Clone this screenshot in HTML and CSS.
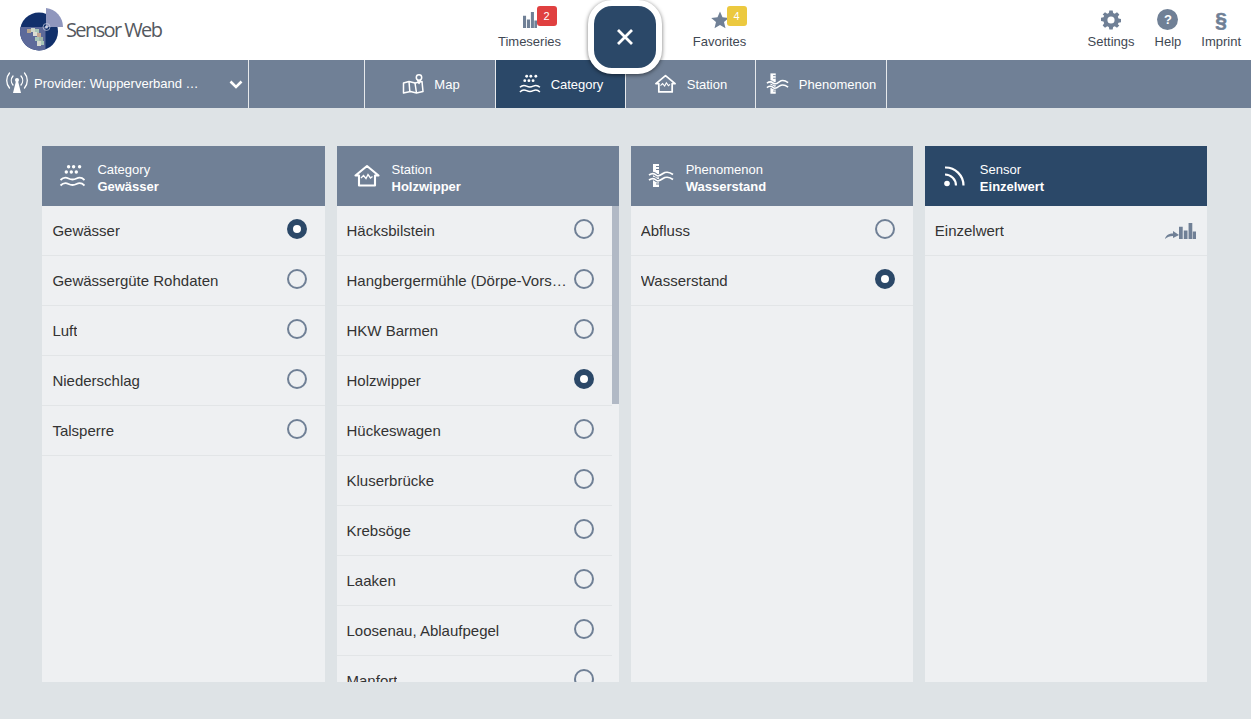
FILE: index.html
```html
<!DOCTYPE html>
<html lang="de">
<head>
  <meta charset="UTF-8">
  <meta name="viewport" content="width=device-width, initial-scale=1">
  <title>Sensor Web</title>
  <link rel="stylesheet" href="styles.css">
</head>
<body>
  <!-- Icons -->
  <svg class="icon-defs" width="0" height="0">
    <symbol id="i-water" viewBox="0 0 26 24">
      <g fill="currentColor">
        <circle cx="9.600" cy="2.700" r="1.700"/><circle cx="14.600" cy="2.700" r="1.700"/><circle cx="20.600" cy="2.700" r="1.700"/>
        <circle cx="7.300" cy="8" r="1.700"/><circle cx="12.300" cy="8" r="1.700"/><circle cx="17.300" cy="8" r="1.700"/>
      </g>
      <g fill="none" stroke="currentColor" stroke-width="1.800">
        <path d="M1.500 16c3-3 5-3 8-1.500s5 1.500 8 0 5-1.500 8 1.500"/>
        <path d="M1.500 21.500c3-3 5-3 8-1.500s5 1.500 8 0 5-1.500 8 1.500"/>
      </g>
    </symbol>
    <symbol id="i-house" viewBox="0 0 26 24">
      <path d="M1.500 11.500 13 2l11.500 9.500h-3.500v10H5v-10z" fill="none" stroke="currentColor" stroke-width="2.100" stroke-linejoin="round"/>
      <path d="M7 14l2.500-2.500 2.500 3 2-4 2.500 3.500 2-1.500" fill="none" stroke="currentColor" stroke-width="1.300"/>
    </symbol>
    <symbol id="i-gauge" viewBox="0 0 26 24">
      <path d="M5 0h6v23H5z" fill="currentColor"/>
      <path d="M8 2.500h3M8 5.500h3M8 20h3" stroke="#708096" stroke-width="1"/>
      <g fill="none" stroke="#708096" stroke-width="3.400">
        <path d="M1 11c3-2 5-2 7 0s5 0 7-1.500 6-2 10 1"/>
        <path d="M1 16c3-2 5-2 7 0s5 0 7-1.500 6-2 10 1"/>
      </g>
      <g fill="none" stroke="currentColor" stroke-width="1.700">
        <path d="M1 11c3-2 5-2 7 0s5 0 7-1.500 6-2 10 1"/>
        <path d="M1 16c3-2 5-2 7 0s5 0 7-1.500 6-2 10 1"/>
      </g>
    </symbol>
    <symbol id="i-map" viewBox="0 0 22 20">
      <g fill="none" stroke="currentColor" stroke-width="1.500" stroke-linejoin="round">
        <path d="M1.500 9 7 7.500l6 1.500 7-1.500 1 10-6.500 1.500-6-1.500-7 1.500z"/>
        <path d="M7 7.500l.8 10M13 9l1.500 10"/>
        <path d="M17 9 15 5h4z" fill="#708096" stroke="none"/>
        <circle cx="17" cy="3.500" r="2.700" fill="#708096"/>
        <path d="M15.500 6 17 9.500 18.500 6"/>
      </g>
    </symbol>
    <symbol id="i-chart" viewBox="0 0 16 18" preserveAspectRatio="none">
      <path d="M0 5h3.500v13H0zM4.500 9H8v9H4.500zM9 1h3.500v17H9zM13 10h3v8h-3z" fill="currentColor"/>
    </symbol>
    <clipPath id="logo-quad">
      <rect x="0" y="19" width="25.500" height="25"/>
    </clipPath>
  </svg>

  <div class="page">
    <!-- Kopfzeile -->
    <header class="topbar">
      <div class="logo">
        <svg class="logo-mark" width="46" height="44" viewBox="0 0 46 44">
          <circle cx="19" cy="23.500" r="19" fill="#12306b"/>
          <circle cx="19" cy="23.500" r="19" fill="#5d6a9a" clip-path="url(#logo-quad)"/>
          <path d="M26 0a19 19 0 0 1 17 19H26z" fill="#8f96bd"/>
          <g>
            <rect x="7" y="21" width="4" height="4" fill="#b9a68f"/>
            <rect x="11" y="20" width="4" height="4" fill="#cfd6c8"/>
            <rect x="15" y="21" width="4" height="4" fill="#a9c6b8"/>
            <rect x="13" y="24" width="4" height="4" fill="#dcdcd2"/>
            <rect x="17" y="25" width="4" height="4" fill="#c3a593"/>
            <rect x="15" y="29" width="4" height="4" fill="#a9c6b8"/>
            <rect x="19" y="29" width="4" height="4" fill="#9fb4a9"/>
            <rect x="17" y="33" width="4" height="5" fill="#d5d8cd"/>
            <rect x="21" y="33" width="3" height="4" fill="#a9c6b8"/>
          </g>
          <circle cx="26.500" cy="19" r="3.500" fill="none" stroke="#c9cfe0" stroke-width=".7"/>
          <circle cx="26.500" cy="19" r="1.500" fill="#c9cfe0"/>
        </svg>
        <span class="logo-text">Sensor Web</span>
      </div>
      <nav class="center-nav">
        <a class="top-item">
          <span class="top-icon">
            <svg class="chart-small" width="14" height="17"><use href="#i-chart"/></svg>
            <span class="badge badge-red">2</span>
          </span>
          Timeseries
        </a>
        <div class="center-slot">
          <button class="close-btn">
            <svg width="20" height="20" viewBox="0 0 20 20"><path d="M3 3l14 14M17 3 3 17" stroke="#fff" stroke-width="2.800"/></svg>
          </button>
        </div>
        <a class="top-item">
          <span class="top-icon">
            <svg width="18" height="18" viewBox="0 0 18 18"><path d="M9 .5l2.500 5.800 6.300 .6-4.800 4.100 1.500 6.200L9 13.900l-5.500 3.300L5 11 .2 6.900l6.300-.6z" fill="#708096"/></svg>
            <span class="badge badge-yellow">4</span>
          </span>
          Favorites
        </a>
      </nav>
      <nav class="right-nav">
        <a class="top-item">
          <span class="top-icon">
            <svg width="20" height="20" viewBox="0 0 24 24"><path d="M10 .5h4l.6 3.200 1.900.8L19.200 2.700 22 5.500l-1.800 2.700.8 1.900 3 .6v4l-3 .6-.8 1.900L22 18.500l-2.800 2.800-2.700-1.800-1.900.8-.6 3.200h-4l-.6-3.200-1.900-.8-2.700 1.800L2 18.500l1.800-2.700-.8-1.900-3-.6v-4l3-.6.8-1.900L2 5.500l2.800-2.800L7.500 4.500l1.900-.8zM12 7.700a4.300 4.300 0 1 0 0 8.600 4.300 4.300 0 0 0 0-8.600z" fill="#708096" fill-rule="evenodd"/></svg>
          </span>
          Settings
        </a>
        <a class="top-item">
          <span class="top-icon"><span class="help-dot">?</span></span>
          Help
        </a>
        <a class="top-item">
          <span class="top-icon"><span class="para">§</span></span>
          Imprint
        </a>
      </nav>
    </header>

    <!-- Schritte -->
    <nav class="stepbar">
      <div class="provider">
        <svg class="provider-icon" width="22" height="22" viewBox="0 0 22 22">
          <g fill="none" stroke="#fff" stroke-width="1.300" stroke-linecap="round">
            <path d="M7 4a7 7 0 0 0 0 9M15 4a7 7 0 0 1 0 9"/>
            <path d="M3.500 1a11.500 11.500 0 0 0 0 15M18.500 1a11.500 11.500 0 0 1 0 15"/>
          </g>
          <circle cx="11" cy="8" r="2" fill="#fff"/>
          <path d="M10 9h2l3 12H7z" fill="#fff"/>
        </svg>
        <span class="provider-name">Provider: Wupperverband&nbsp;Wuppertal</span>
        <svg class="chevron" width="14" height="9" viewBox="0 0 14 9"><path d="M1.500 1.500 7 7l5.500-5.500" fill="none" stroke="#fff" stroke-width="2.600"/></svg>
      </div>
      <div class="step-empty"></div>
      <a class="step"><svg width="22" height="20"><use href="#i-map"/></svg>Map</a>
      <a class="step step-active"><svg width="23" height="20"><use href="#i-water"/></svg>Category</a>
      <a class="step"><svg width="23" height="20"><use href="#i-house"/></svg>Station</a>
      <a class="step"><svg width="23" height="22"><use href="#i-gauge"/></svg>Phenomenon</a>
    </nav>

    <!-- Listen -->
    <main class="columns">
      <section class="column">
        <div class="column-head">
          <svg width="26" height="24"><use href="#i-water"/></svg>
          <div class="head-text"><span>Category</span><b>Gewässer</b></div>
        </div>
        <ul class="rows">
          <li class="row"><span class="row-name">Gewässer</span><span class="radio radio-on"></span></li>
          <li class="row"><span class="row-name">Gewässergüte Rohdaten</span><span class="radio"></span></li>
          <li class="row"><span class="row-name">Luft</span><span class="radio"></span></li>
          <li class="row"><span class="row-name">Niederschlag</span><span class="radio"></span></li>
          <li class="row"><span class="row-name">Talsperre</span><span class="radio"></span></li>
        </ul>
      </section>

      <section class="column">
        <div class="column-head">
          <svg width="26" height="24"><use href="#i-house"/></svg>
          <div class="head-text"><span>Station</span><b>Holzwipper</b></div>
        </div>
        <div class="scroll-wrap">
          <ul class="rows rows-scroll">
            <li class="row"><span class="row-name">Häcksbilstein</span><span class="radio"></span></li>
            <li class="row"><span class="row-name">Hangbergermühle (Dörpe-Vorsperre)</span><span class="radio"></span></li>
            <li class="row"><span class="row-name">HKW Barmen</span><span class="radio"></span></li>
            <li class="row"><span class="row-name">Holzwipper</span><span class="radio radio-on"></span></li>
            <li class="row"><span class="row-name">Hückeswagen</span><span class="radio"></span></li>
            <li class="row"><span class="row-name">Kluserbrücke</span><span class="radio"></span></li>
            <li class="row"><span class="row-name">Krebsöge</span><span class="radio"></span></li>
            <li class="row"><span class="row-name">Laaken</span><span class="radio"></span></li>
            <li class="row"><span class="row-name">Loosenau, Ablaufpegel</span><span class="radio"></span></li>
            <li class="row"><span class="row-name">Manfort</span><span class="radio"></span></li>
          </ul>
          <div class="scroll-thumb"></div>
        </div>
      </section>

      <section class="column">
        <div class="column-head">
          <svg width="26" height="24"><use href="#i-gauge"/></svg>
          <div class="head-text"><span>Phenomenon</span><b>Wasserstand</b></div>
        </div>
        <ul class="rows">
          <li class="row"><span class="row-name">Abfluss</span><span class="radio"></span></li>
          <li class="row"><span class="row-name">Wasserstand</span><span class="radio radio-on"></span></li>
        </ul>
      </section>

      <section class="column">
        <div class="column-head column-head-dark">
          <svg width="26" height="24" viewBox="0 0 26 24">
            <circle cx="5" cy="19.500" r="2.800" fill="#fff"/>
            <g fill="none" stroke="#fff" stroke-width="2.200">
              <path d="M3 10.500a11 11 0 0 1 11 11"/>
              <path d="M3 3.500a18 18 0 0 1 18.500 18"/>
            </g>
          </svg>
          <div class="head-text"><span>Sensor</span><b>Einzelwert</b></div>
        </div>
        <ul class="rows">
          <li class="row">
            <span class="row-name">Einzelwert</span>
            <span class="row-chart">
              <svg width="14" height="9" viewBox="0 0 14 9"><path d="M0 9c1-4 4-5.500 8-5.500V1l6 4-6 3V6C5 6 2 7 0 9z" fill="#708096"/></svg>
              <svg class="chart-small" width="17" height="17"><use href="#i-chart"/></svg>
            </span>
          </li>
        </ul>
      </section>
    </main>
  </div>
</body>
</html>
```

FILE: styles.css
```css
/* General */
* {
  box-sizing: border-box;
}
body {
  margin: 0;
  font-family: "Liberation Sans", Arial, sans-serif;
  background: #dee3e6;
  color: #333;
  overflow: hidden;
}
.icon-defs {
  position: absolute;
}
.page {
  display: flex;
  flex-direction: column;
  height: 100vh;
}
ul {
  list-style: none;
  margin: 0;
  padding: 0;
}

/* Top bar */
.topbar {
  display: grid;
  grid-template-columns: 1fr auto 1fr;
  height: 60px;
  background: #fff;
}
.logo {
  display: flex;
  align-items: center;
  padding-left: 20px;
}
.logo-text {
  font-family: "Open Sans", sans-serif;
  font-size: 20px;
  letter-spacing: -1.6px;
  color: #55595f;
  margin-top: -1px;
}
.center-nav {
  display: grid;
  grid-template-columns: 80px 110px 80px;
  margin-left: -2px;
}
.right-nav {
  display: flex;
  justify-content: flex-end;
  gap: 20px;
  padding-right: 10px;
}
.top-item {
  display: flex;
  flex-direction: column;
  align-items: center;
  font-size: 13px;
  line-height: 15px;
  color: #3f4853;
  white-space: nowrap;
  padding-top: 7px;
}
.top-icon {
  position: relative;
  display: flex;
  justify-content: center;
  align-items: center;
  height: 25px;
  margin-bottom: 2px;
}
.chart-small {
  color: #708096;
}
.badge {
  position: absolute;
  top: -1px;
  left: 14px;
  width: 20px;
  height: 20px;
  border-radius: 3px;
  color: #fff;
  font-size: 11px;
  line-height: 20px;
  text-align: center;
}
.badge-red {
  background: #e04040;
}
.badge-yellow {
  background: #ecc93f;
  left: 16px;
}
.help-dot {
  width: 21px;
  height: 21px;
  border-radius: 50%;
  background: #708096;
  color: #fff;
  font-size: 13px;
  font-weight: bold;
  line-height: 22px;
  text-align: center;
}
.para {
  color: #708096;
  font-size: 21px;
  font-weight: bold;
  line-height: 21px;
  -webkit-text-stroke: 0.6px #708096;
}

/* Close button */
.center-slot {
  position: relative;
}
.close-btn {
  position: absolute;
  top: 0;
  left: 18px;
  z-index: 5;
  width: 74px;
  height: 74px;
  display: flex;
  align-items: center;
  justify-content: center;
  background: #2b4868;
  border: 6px solid #fff;
  border-radius: 24px;
  box-shadow: 0 1px 4px rgba(0,0,0,0.55);
  padding: 0;
}

/* Step bar */
.stepbar {
  display: flex;
  height: 48px;
  background: #708096;
  color: #fff;
  font-size: 13px;
}
.provider {
  display: flex;
  align-items: center;
  width: 249px;
  padding: 0 5px 0 6px;
  border-right: 1px solid #e6e9ec;
}
.provider-icon {
  flex: none;
  margin-top: -2px;
}
.provider-name {
  width: 165px;
  margin-left: 6px;
  margin-top: -2px;
  overflow: hidden;
  white-space: nowrap;
  text-overflow: ellipsis;
}
.chevron {
  margin-left: 30px;
}
.step-empty {
  width: 116px;
  border-right: 1px solid #e6e9ec;
}
.step {
  display: flex;
  align-items: center;
  justify-content: center;
  gap: 10px;
  width: 130px;
  border-right: 1px solid #e6e9ec;
}
.step:nth-child(3) {
  width: 131px;
  padding-left: 2px;
}
.step:nth-child(6) {
  width: 131px;
}
.step-active {
  background: #2b4868;
}

/* Columns */
.columns {
  flex: 1;
  min-height: 0;
  display: grid;
  grid-template-columns: repeat(4, 1fr);
  gap: 12px;
  padding: 38px 44px 37px 42.4px;
}
.column {
  display: flex;
  flex-direction: column;
  min-height: 0;
  min-width: 0;
  background: #eef0f2;
}
.column-head {
  display: flex;
  align-items: center;
  gap: 12px;
  flex: none;
  height: 60px;
  padding-left: 17px;
  background: #708096;
  color: #fff;
}
.column-head-dark {
  background: #2b4868;
}
.head-text {
  display: flex;
  flex-direction: column;
  padding-top: 4px;
  font-size: 13px;
  line-height: 17px;
}
.row {
  display: flex;
  align-items: center;
  justify-content: space-between;
  height: 50px;
  flex: none;
  padding: 0 18px 0 10px;
  border-bottom: 1px solid #e2e5e7;
  font-size: 15px;
}
.row-name {
  min-width: 0;
  overflow: hidden;
  white-space: nowrap;
  text-overflow: ellipsis;
  margin-right: 4px;
  margin-top: -1px;
}
.radio {
  flex: none;
  width: 20px;
  height: 20px;
  margin-top: -3px;
  border: 2px solid #708096;
  border-radius: 50%;
}
.radio-on {
  border: 6px solid #2b4868;
  background: #fff;
}
.row-chart {
  display: flex;
  align-items: flex-end;
  margin-right: -7px;
}

/* Scrolling list */
.scroll-wrap {
  position: relative;
  flex: 1;
  min-height: 0;
  overflow: hidden;
}
.rows-scroll {
  margin-right: 7px;
}
.scroll-thumb {
  position: absolute;
  top: 0;
  right: 0;
  width: 7px;
  height: 198px;
  background: #b1b9c5;
}
```
